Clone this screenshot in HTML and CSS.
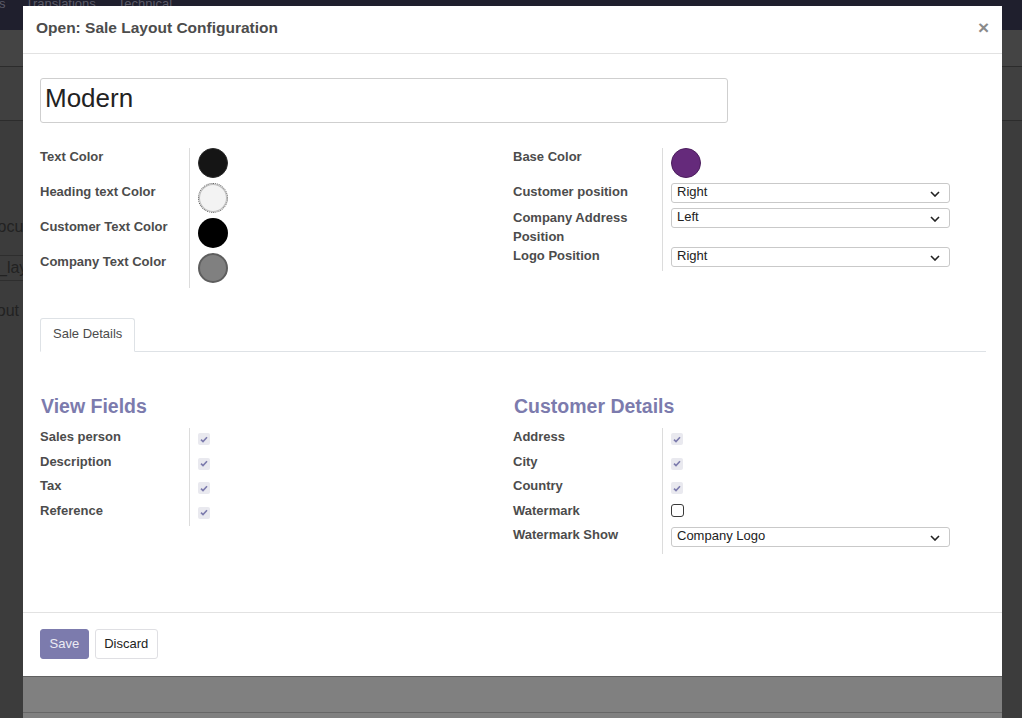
FILE: index.html
```html
<!DOCTYPE html>
<html>
<head>
<meta charset="utf-8">
<title>Open: Sale Layout Configuration</title>
<link rel="stylesheet" href="styles.css">
</head>
<body>
<div class="page">
  <nav class="topbar"><span class="nav-s">s</span><span>Translations</span><span>Technical</span></nav>
  <div class="cp1"></div>
  <div class="cp2"></div>
  <div class="sheet">
    <div class="bg-text t1">Document Layout</div>
    <div class="bg-field">_layout</div>
    <div class="bg-text t3">Layout</div>
  </div>
</div>

<div class="behind"><div class="behind-foot"></div></div>

<div class="modal">
  <header class="mhead">
    <h4 class="mtitle">Open: Sale Layout Configuration</h4>
    <span class="close">×</span>
  </header>
  <main class="mbody">
    <div class="name-input">Modern</div>

    <div class="groups">
      <div class="grp">
        <div class="lbl">Text Color</div>
        <div class="val"><span class="dot dot-text"></span></div>
        <div class="lbl">Heading text Color</div>
        <div class="val"><span class="dot dot-heading"></span></div>
        <div class="lbl">Customer Text Color</div>
        <div class="val"><span class="dot dot-customer"></span></div>
        <div class="lbl">Company Text Color</div>
        <div class="val"><span class="dot dot-company"></span></div>
      </div>
      <div class="grp">
        <div class="lbl">Base Color</div>
        <div class="val"><span class="dot dot-base"></span></div>
        <div class="lbl">Customer position</div>
        <div class="val"><div class="sel"><span>Right</span><svg class="chev" width="10" height="6" viewBox="0 0 10 6"><path d="M1 1l4 4 4-4" fill="none" stroke="#222" stroke-width="1.6"/></svg></div></div>
        <div class="lbl lbl-two">Company Address Position</div>
        <div class="val"><div class="sel"><span>Left</span><svg class="chev" width="10" height="6" viewBox="0 0 10 6"><path d="M1 1l4 4 4-4" fill="none" stroke="#222" stroke-width="1.6"/></svg></div></div>
        <div class="lbl lbl-last">Logo Position</div>
        <div class="val val-last"><div class="sel"><span>Right</span><svg class="chev" width="10" height="6" viewBox="0 0 10 6"><path d="M1 1l4 4 4-4" fill="none" stroke="#222" stroke-width="1.6"/></svg></div></div>
      </div>
    </div>

    <div class="tabs"><div class="tab">Sale Details</div></div>

    <div class="groups groups-bottom">
      <div class="col">
        <h3 class="sec">View Fields</h3>
        <div class="grp grp-check">
          <div class="lbl">Sales person</div>
          <div class="val"><span class="cb"><svg width="8" height="7" viewBox="0 0 8 7"><path d="M1 3.6l2 2 4-4.4" fill="none" stroke="#7c7bad" stroke-width="1.6"/></svg></span></div>
          <div class="lbl">Description</div>
          <div class="val"><span class="cb"><svg width="8" height="7" viewBox="0 0 8 7"><path d="M1 3.6l2 2 4-4.4" fill="none" stroke="#7c7bad" stroke-width="1.6"/></svg></span></div>
          <div class="lbl">Tax</div>
          <div class="val"><span class="cb"><svg width="8" height="7" viewBox="0 0 8 7"><path d="M1 3.6l2 2 4-4.4" fill="none" stroke="#7c7bad" stroke-width="1.6"/></svg></span></div>
          <div class="lbl">Reference</div>
          <div class="val"><span class="cb"><svg width="8" height="7" viewBox="0 0 8 7"><path d="M1 3.6l2 2 4-4.4" fill="none" stroke="#7c7bad" stroke-width="1.6"/></svg></span></div>
        </div>
      </div>
      <div class="col">
        <h3 class="sec">Customer Details</h3>
        <div class="grp grp-check">
          <div class="lbl">Address</div>
          <div class="val"><span class="cb"><svg width="8" height="7" viewBox="0 0 8 7"><path d="M1 3.6l2 2 4-4.4" fill="none" stroke="#7c7bad" stroke-width="1.6"/></svg></span></div>
          <div class="lbl">City</div>
          <div class="val"><span class="cb"><svg width="8" height="7" viewBox="0 0 8 7"><path d="M1 3.6l2 2 4-4.4" fill="none" stroke="#7c7bad" stroke-width="1.6"/></svg></span></div>
          <div class="lbl">Country</div>
          <div class="val"><span class="cb"><svg width="8" height="7" viewBox="0 0 8 7"><path d="M1 3.6l2 2 4-4.4" fill="none" stroke="#7c7bad" stroke-width="1.6"/></svg></span></div>
          <div class="lbl">Watermark</div>
          <div class="val"><span class="cb-empty"></span></div>
          <div class="lbl">Watermark Show</div>
          <div class="val val-sel"><div class="sel"><span>Company Logo</span><svg class="chev" width="10" height="6" viewBox="0 0 10 6"><path d="M1 1l4 4 4-4" fill="none" stroke="#222" stroke-width="1.6"/></svg></div></div>
        </div>
      </div>
    </div>
  </main>
  <footer class="mfoot">
    <button class="btn btn-save">Save</button>
    <button class="btn btn-discard">Discard</button>
  </footer>
</div>
</body>
</html>
```
FILE: styles.css
```css
* { box-sizing: border-box; }
html, body { margin: 0; padding: 0; }
body {
  width: 1022px;
  height: 718px;
  overflow: hidden;
  background: #3c3c3c;
  font-family: "Liberation Sans", Arial, sans-serif;
  font-size: 13px;
  color: #4c4c4c;
  position: relative;
}

/* dimmed page behind */
.page { width: 100%; }
.topbar {
  height: 30px;
  background: #1f1f2d;
  display: flex;
  gap: 22px;
  font-size: 13px;
  line-height: 8px;
  color: #5b5b68;
}
.nav-s { margin-left: -1px; margin-right: -2px; }
.cp1 { height: 37px; background: #444444; border-bottom: 1px solid #2c2c2c; }
.cp2 { height: 54px; background: #404040; border-bottom: 1px solid #2c2c2c; }
.sheet { padding-top: 96px; font-size: 16px; color: #222; }
.bg-text.t1 { margin-left: -14px; line-height: 20px; }
.bg-field {
  margin-top: 18px;
  margin-left: -2px;
  height: 26px;
  line-height: 24px;
  border-top: 1px solid #2e2e2e;
  border-bottom: 1px solid #2e2e2e;
  width: 60px;
}
.bg-text.t3 { margin-top: 20px; margin-left: -29px; line-height: 20px; }

.behind {
  position: absolute;
  left: 23px;
  top: 30px;
  width: 979px;
  height: 700px;
  background: #808080;
}
.behind-foot {
  margin-top: 682px;
  border-top: 1px solid #676767;
}

/* modal */
.modal {
  position: absolute;
  left: 23px;
  top: 6px;
  width: 979px;
  height: 670px;
  background: #fff;
  display: flex;
  flex-direction: column;
  box-shadow: 0 1px 0 #606060;
}
.mhead {
  height: 48px;
  border-bottom: 1px solid #e2e2e2;
  display: flex;
  align-items: center;
  justify-content: space-between;
  padding: 0 13px 4px 13px;
}
.mtitle {
  margin: 0;
  font-size: 15.5px;
  font-weight: bold;
  color: #4c4c4c;
  line-height: 20px;
}
.close {
  font-size: 19px;
  font-weight: bold;
  color: #8a8a8a;
  line-height: 20px;
}
.mbody {
  flex: 1;
  padding: 24px 16px 0 17px;
}
.name-input {
  width: 688px;
  height: 45px;
  border: 1px solid #cfcfcf;
  border-radius: 3px;
  font-size: 26px;
  line-height: 38px;
  padding-left: 4px;
  color: #222;
}

.groups {
  display: grid;
  grid-template-columns: 473px 473px;
  margin-top: 25px;
  align-items: start;
}
.grp {
  display: grid;
  grid-template-columns: 149px 1fr;
}
.lbl {
  font-weight: bold;
  line-height: 18px;
  padding-bottom: 5px;
  color: #4c4c4c;
}
.lbl-two { width: 130px; line-height: 19px; padding-bottom: 1px; }
.val {
  border-left: 1px solid #dcdcdc;
  padding-left: 8px;
  padding-bottom: 5px;
}
.val-last { padding-bottom: 4px; }
.dot {
  display: block;
  width: 30px;
  height: 30px;
  border-radius: 50%;
}
.dot-text { background: #151515; border: 1px solid #2a2a2a; }
.dot-heading { background: #f3f3f3; border: 1px dotted #555; box-shadow: inset 0 0 0 1px #bdbdbd; }
.dot-customer { background: #000; }
.dot-company { background: #808080; border: 2px solid #5e5e5e; }
.dot-base { background: #652a7b; border: 1.5px solid #4c1e5e; }

.sel {
  width: 279px;
  height: 20px;
  border: 1px solid #c9c9c9;
  border-radius: 3px;
  display: flex;
  align-items: center;
  justify-content: space-between;
  padding: 0 9px 0 5px;
  font-size: 13px;
  color: #222;
  line-height: 16px;
}
.sel span { margin-top: -2px; }
.chev { display: block; margin-top: 1px; }

.tabs {
  margin-top: 30px;
  border-bottom: 1px solid #dee2e6;
  display: flex;
}
.tab {
  height: 34px;
  margin-bottom: -1px;
  border: 1px solid #dee2e6;
  border-bottom-color: #fff;
  border-radius: 3px 3px 0 0;
  padding: 0 12px;
  line-height: 29px;
  color: #4c4c4c;
  background: #fff;
}

.groups-bottom { margin-top: 0; }
.sec {
  margin: 42px 0 10px 1px;
  font-size: 19.5px;
  line-height: 24px;
  font-weight: bold;
  color: #7c7bad;
}
.grp-check .lbl { padding-bottom: 6.5px; }
.grp-check .val { padding-bottom: 6.5px; }
.cb {
  margin-top: 5px;
  width: 12px;
  height: 12px;
  border-radius: 2px;
  background: #e9e9ef;
  display: flex;
  align-items: center;
  justify-content: center;
}
.cb-empty {
  display: block;
  margin-top: 2px;
  width: 13px;
  height: 13px;
  border: 1.5px solid #3a3a3a;
  border-radius: 3px;
  background: #fff;
}
.val-sel { padding-top: 1px; padding-bottom: 4px; }

.mfoot {
  height: 64px;
  border-top: 1px solid #e2e2e2;
  padding: 16px 17px 0;
  display: flex;
  gap: 6px;
  align-items: flex-start;
}
.btn {
  height: 30px;
  padding: 0 8.5px;
  border: 1px solid;
  border-radius: 3px;
  font-family: "Liberation Sans", Arial, sans-serif;
  font-size: 13px;
  line-height: 24px;
}
.btn-save { background: #7c7bad; border-color: #7c7bad; color: #ececf4; }
.btn-discard { background: #fff; border-color: #dfdfe3; color: #222; }
```
